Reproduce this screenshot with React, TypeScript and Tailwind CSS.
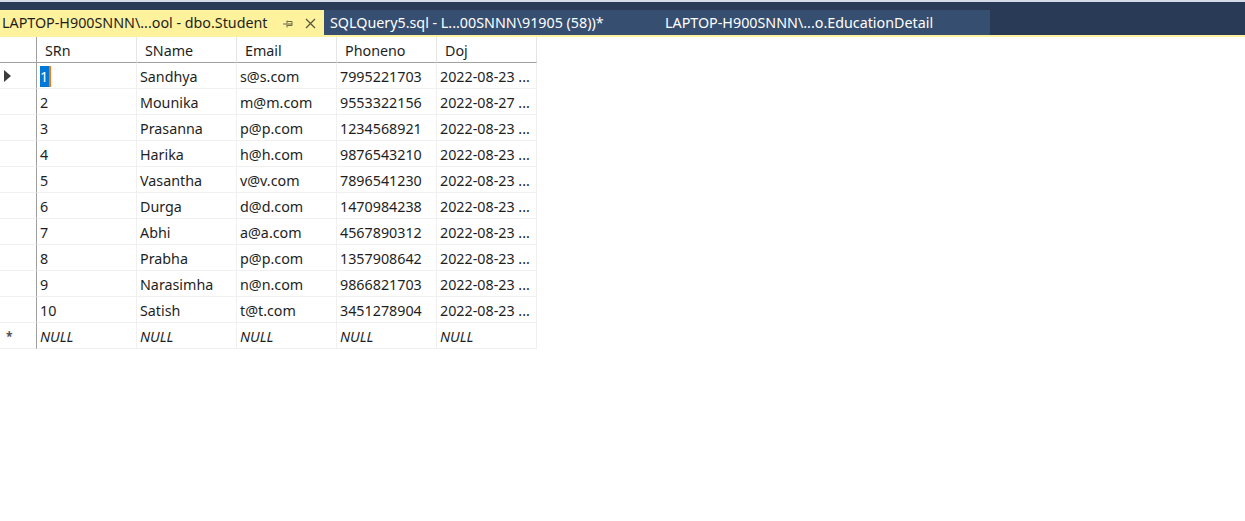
import React from "react";

const rows = [
  ["1", "Sandhya", "s@s.com", "7995221703", "2022-08-23 ..."],
  ["2", "Mounika", "m@m.com", "9553322156", "2022-08-27 ..."],
  ["3", "Prasanna", "p@p.com", "1234568921", "2022-08-23 ..."],
  ["4", "Harika", "h@h.com", "9876543210", "2022-08-23 ..."],
  ["5", "Vasantha", "v@v.com", "7896541230", "2022-08-23 ..."],
  ["6", "Durga", "d@d.com", "1470984238", "2022-08-23 ..."],
  ["7", "Abhi", "a@a.com", "4567890312", "2022-08-23 ..."],
  ["8", "Prabha", "p@p.com", "1357908642", "2022-08-23 ..."],
  ["9", "Narasimha", "n@n.com", "9866821703", "2022-08-23 ..."],
  ["10", "Satish", "t@t.com", "3451278904", "2022-08-23 ..."],
];

const headers = ["SRn", "SName", "Email", "Phoneno", "Doj"];

export default function App() {
  return (
    <div
      className="h-[521px] w-[1245px] overflow-hidden bg-white text-[14.3px] text-[#1e1e1e]"
      style={{ fontFamily: '"Noto Sans", "Open Sans", sans-serif' }}
    >
      {/* tab strip */}
      <div className="h-[2px] bg-[#d6dbe9]" />
      <div className="flex h-[33px] items-end bg-[#293a56] pt-[8px]">
        <div className="flex h-[25px] w-[324px] items-center bg-[#fff29d] pl-[2px] pt-[2px] leading-none text-[#1e1e1e]">
          <span className="whitespace-nowrap">LAPTOP-H900SNNN\...ool - dbo.Student</span>
          <svg className="ml-[14px]" width="12" height="12" viewBox="0 0 12 12">
            <path d="M1 6h4M5 2.5v7M5 3.5h5v4H5M6 6h4" stroke="#6f6a45" strokeWidth="1" fill="none" />
          </svg>
          <svg className="ml-[11px]" width="11" height="11" viewBox="0 0 11 11">
            <path d="M1 1l9 9M10 1l-9 9" stroke="#5a5640" strokeWidth="1.3" />
          </svg>
        </div>
        <div className="flex h-[25px] w-[666px] items-center bg-[#364e6f] pt-[2px] leading-none text-white">
          <span className="ml-[6px] w-[335px] whitespace-nowrap">SQLQuery5.sql - L...00SNNN\91905 (58))*</span>
          <span className="whitespace-nowrap">LAPTOP-H900SNNN\...o.EducationDetail</span>
        </div>
      </div>
      <div className="h-[2px] bg-[#fff29d]" />

      {/* results grid */}
      <div className="grid w-[537px] grid-cols-[37px_repeat(5,100px)] auto-rows-[26px]">
        <div className="border-r border-b border-r-[#a0a0a0] border-b-[#a0a0a0]" />
        {headers.map((h) => (
          <div
            key={h}
            className="flex items-center border-r border-b border-r-[#e5e5e5] border-b-[#a0a0a0] pl-[8px] pt-[2px]"
          >
            {h}
          </div>
        ))}

        {rows.map((r, i) => (
          <React.Fragment key={i}>
            <div className="flex items-center border-r border-b border-r-[#a0a0a0] border-b-[#f0f0f0] pl-[4px]">
              {i === 0 && (
                <svg width="7" height="12" viewBox="0 0 7 12">
                  <path d="M0 0l7 6-7 6z" fill="#3c3c3c" />
                </svg>
              )}
            </div>
            {r.map((c, j) => (
              <div
                key={j}
                className="flex items-center border-r border-b border-[#f0f0f0] pl-[3px] pt-[2px] whitespace-nowrap"
              >
                {i === 0 && j === 0 ? (
                  <span className="border-r-2 border-[#f07a18] bg-[#0078d7] pr-[1px] text-white">{c}</span>
                ) : (
                  c
                )}
              </div>
            ))}
          </React.Fragment>
        ))}

        <div className="flex items-center border-r border-b border-r-[#a0a0a0] border-b-[#f0f0f0] pl-[6px] pt-[2px] text-[12px] font-bold text-[#505050]">
          *
        </div>
        {headers.map((h) => (
          <div
            key={h}
            className="flex items-center border-r border-b border-[#f0f0f0] pl-[3px] pt-[2px] italic"
          >
            NULL
          </div>
        ))}
      </div>
    </div>
  );
}
